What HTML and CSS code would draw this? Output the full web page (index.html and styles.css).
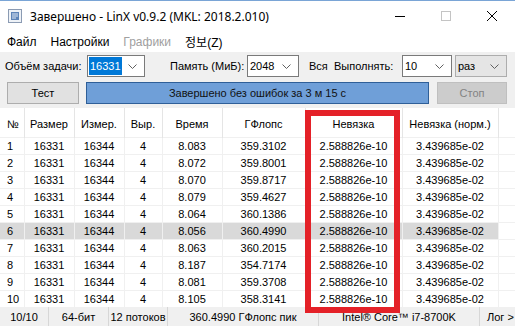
FILE: index.html
```html
<!DOCTYPE html>
<html lang="ru">
<head>
  <meta charset="UTF-8" />
  <title>LinX</title>
  <link rel="stylesheet" href="styles.css">
</head>
<body>
<div class="window">

  <!-- Title bar -->
  <div class="titlebar">
    <svg class="app-icon" width="16" height="16" viewBox="0 0 16 16">
      <rect x="1.5" y="1.5" width="13" height="13" fill="#eef2f7" stroke="#8b9bb3"/>
      <rect x="4" y="4" width="8" height="8" fill="#5d84b8"/>
      <rect x="5" y="5.5" width="6" height="1" fill="#dfe8f3"/>
      <rect x="5" y="7.5" width="6" height="1" fill="#dfe8f3"/>
      <rect x="5" y="9.5" width="4" height="1" fill="#dfe8f3"/>
    </svg>
    <span class="title">Завершено - LinX v0.9.2 (MKL: 2018.2.010)</span>
    <div class="controls">
      <span class="ctl"><svg width="10" height="10" viewBox="0 0 10 10"><line x1="0" y1="5.5" x2="10" y2="5.5" stroke="#000"/></svg></span>
      <span class="ctl"><svg width="10" height="10" viewBox="0 0 10 10"><rect x="0.5" y="0.5" width="9" height="9" fill="none" stroke="#c4c4c4"/></svg></span>
      <span class="ctl"><svg width="10" height="10" viewBox="0 0 10 10"><path d="M0 0 L10 10 M10 0 L0 10" stroke="#000" stroke-width="1"/></svg></span>
    </div>
  </div>

  <!-- Menu -->
  <div class="menubar">
    <span class="menu-item">Файл</span>
    <span class="menu-item">Настройки</span>
    <span class="menu-item disabled">Графики</span>
    <span class="menu-item">정보(Z)</span>
  </div>

  <!-- Settings -->
  <div class="toolbar">
    <div class="tool-row">
      <span class="label lbl-size">Объём задачи:</span>
      <div class="combo cb-size"><span class="selected">16331</span><svg class="chev" width="9" height="5" viewBox="0 0 9 5"><polyline points="0.5,0.5 4.5,4.5 8.5,0.5" fill="none" stroke="#606060"/></svg></div>
      <span class="label lbl-mem">Память (МиБ):</span>
      <div class="combo cb-mem"><span>2048</span><svg class="chev" width="9" height="5" viewBox="0 0 9 5"><polyline points="0.5,0.5 4.5,4.5 8.5,0.5" fill="none" stroke="#606060"/></svg></div>
      <span class="label lbl-all">Вся</span>
      <span class="label lbl-run">Выполнять:</span>
      <div class="combo cb-runs"><span>10</span><svg class="chev" width="9" height="5" viewBox="0 0 9 5"><polyline points="0.5,0.5 4.5,4.5 8.5,0.5" fill="none" stroke="#606060"/></svg></div>
      <div class="combo combo-ro cb-unit"><span>раз</span><svg class="chev" width="9" height="5" viewBox="0 0 9 5"><polyline points="0.5,0.5 4.5,4.5 8.5,0.5" fill="none" stroke="#606060"/></svg></div>
    </div>
    <div class="tool-row">
      <button class="btn btn-test">Тест</button>
      <div class="progress">Завершено без ошибок за 3 м 15 с</div>
      <button class="btn btn-stop" disabled>Стоп</button>
    </div>
  </div>

  <!-- Results -->
  <table class="results">
    <colgroup>
      <col style="width:24px"><col style="width:50px"><col style="width:50px"><col style="width:38px">
      <col style="width:60px"><col style="width:83px"><col style="width:97px"><col style="width:96px"><col>
    </colgroup>
    <thead>
      <tr>
        <th class="num">№</th><th>Размер</th><th>Измер.</th><th>Выр.</th><th>Время</th>
        <th>ГФлопс</th><th>Невязка</th><th>Невязка (норм.)</th><th class="filler"></th>
      </tr>
    </thead>
    <tbody>
      <tr><td class="num">1</td><td>16331</td><td>16344</td><td>4</td><td>8.083</td><td>359.3102</td><td>2.588826e-10</td><td>3.439685e-02</td><td class="filler"></td></tr>
      <tr><td class="num">2</td><td>16331</td><td>16344</td><td>4</td><td>8.072</td><td>359.8001</td><td>2.588826e-10</td><td>3.439685e-02</td><td class="filler"></td></tr>
      <tr><td class="num">3</td><td>16331</td><td>16344</td><td>4</td><td>8.070</td><td>359.8717</td><td>2.588826e-10</td><td>3.439685e-02</td><td class="filler"></td></tr>
      <tr><td class="num">4</td><td>16331</td><td>16344</td><td>4</td><td>8.079</td><td>359.4627</td><td>2.588826e-10</td><td>3.439685e-02</td><td class="filler"></td></tr>
      <tr><td class="num">5</td><td>16331</td><td>16344</td><td>4</td><td>8.064</td><td>360.1386</td><td>2.588826e-10</td><td>3.439685e-02</td><td class="filler"></td></tr>
      <tr class="best"><td class="num">6</td><td>16331</td><td>16344</td><td>4</td><td>8.056</td><td>360.4990</td><td>2.588826e-10</td><td>3.439685e-02</td><td class="filler"></td></tr>
      <tr><td class="num">7</td><td>16331</td><td>16344</td><td>4</td><td>8.063</td><td>360.2015</td><td>2.588826e-10</td><td>3.439685e-02</td><td class="filler"></td></tr>
      <tr><td class="num">8</td><td>16331</td><td>16344</td><td>4</td><td>8.187</td><td>354.7174</td><td>2.588826e-10</td><td>3.439685e-02</td><td class="filler"></td></tr>
      <tr><td class="num">9</td><td>16331</td><td>16344</td><td>4</td><td>8.081</td><td>359.3708</td><td>2.588826e-10</td><td>3.439685e-02</td><td class="filler"></td></tr>
      <tr><td class="num">10</td><td>16331</td><td>16344</td><td>4</td><td>8.105</td><td>358.3141</td><td>2.588826e-10</td><td>3.439685e-02</td><td class="filler"></td></tr>
    </tbody>
  </table>

  <!-- Status bar -->
  <div class="statusbar">
    <span class="sb sb-count">10/10</span>
    <span class="sb sb-bits">64-бит</span>
    <span class="sb sb-threads">12 потоков</span>
    <span class="sb sb-peak">360.4990 ГФлопс пик</span>
    <span class="sb sb-cpu">Intel® Core™ i7-8700K</span>
    <span class="sb sb-log">Лог &gt;</span>
  </div>

  <!-- Red marker round the residual column -->
  <div class="mark-box"></div>
</div>
</body>
</html>
```

FILE: styles.css
```css
* {
  box-sizing: border-box;
}
body {
  margin: 0;
  background: #fff;
  font-family: 'Liberation Sans', 'Noto Sans CJK KR', sans-serif;
  font-size: 11px;
  color: #000;
}
.window {
  position: relative;
  width: 515px;
  height: 326px;
  overflow: hidden;
  background: #fff;
}

/* title bar */
.titlebar {
  height: 31px;
  display: flex;
  align-items: center;
  border-top: 1px solid #7aa5d6;
  background: #fff;
}
.app-icon {
  margin-left: 7px;
  margin-right: 7px;
}
.title {
  font-family: 'Noto Sans', sans-serif;
  font-size: 12px;
  color: #000;
  white-space: nowrap;
}
.controls {
  margin-left: auto;
  display: flex;
  height: 100%;
}
.ctl {
  width: 46px;
  display: flex;
  align-items: center;
  justify-content: center;
}

/* menu */
.menubar {
  height: 21px;
  display: flex;
  align-items: center;
  background: #fff;
  font-size: 12px;
}
.menu-item {
  padding: 0 7px;
  white-space: nowrap;
}
.menu-item.disabled {
  color: #a0a0a0;
}

/* settings */
.toolbar {
  background: #f0f0f0;
  padding: 3px 0 4px 0;
  height: 56px;
}
.tool-row {
  display: flex;
  align-items: center;
  height: 22px;
}
.tool-row + .tool-row {
  margin-top: 5px;
}
.label {
  white-space: nowrap;
}
.lbl-size { margin-left: 5px; width: 82px; }
.lbl-mem  { margin-left: 25px; width: 77px; }
.lbl-all  { margin-left: 10px; width: 25px; }
.lbl-run  { width: 68px; }

.combo {
  height: 22px;
  background: #fff;
  border: 1px solid #7a7a7a;
  display: flex;
  align-items: center;
  padding-left: 1px;
  position: relative;
}
.combo span {
  padding: 0 1px;
  line-height: 18px;
}
.combo .selected {
  background: #0078d7;
  color: #fff;
}
.combo .chev {
  position: absolute;
  right: 7px;
  top: 8px;
}
.combo-ro {
  background: #e5e5e5;
  border-color: #adadad;
}
.cb-size { width: 58px; }
.cb-mem  { width: 52px; }
.cb-runs { width: 50px; }
.cb-unit { width: 52px; margin-left: 3px; }

.btn {
  height: 22px;
  font-family: inherit;
  font-size: 11px;
  border: 1px solid #adadad;
  background: #e1e1e1;
  color: #000;
  padding: 0;
}
.btn-test {
  margin-left: 7px;
  width: 72px;
}
.btn-stop {
  margin-left: 8px;
  width: 70px;
  background: #cccccc;
  border-color: #bfbfbf;
  color: #838383;
}
.progress {
  margin-left: 7px;
  width: 343px;
  height: 22px;
  background: #6f9fd8;
  border: 1px solid #2f5f98;
  display: flex;
  align-items: center;
  justify-content: center;
  color: #111;
}

/* results table */
.results {
  width: 515px;
  table-layout: fixed;
  border-collapse: collapse;
  font-size: 11px;
}
.results th {
  height: 29px;
  padding: 3px 0 0 0;
  font-weight: normal;
  text-align: center;
  border-right: 1px solid #e5e5e5;
  white-space: nowrap;
}
.results td {
  height: 17px;
  padding: 0;
  text-align: center;
  border-right: 1px solid #f0f0f0;
  border-top: 1px solid #f0f0f0;
  white-space: nowrap;
}
.results .num {
  text-align: left;
  padding-left: 7px;
}
.results .filler {
  border-right: none;
}
.results tr.best td {
  background: #d9d9d9;
}
.results tr.best td.filler {
  background: #fff;
}

/* status bar */
.statusbar {
  height: 19px;
  display: flex;
  align-items: center;
  background: #f0f0f0;
  font-size: 11px;
}
.sb {
  height: 100%;
  display: flex;
  align-items: center;
  justify-content: center;
  border-right: 1px solid #d7d7d7;
  white-space: nowrap;
}
.sb-count   { width: 49px; }
.sb-bits    { width: 60px; }
.sb-threads { width: 59px; }
.sb-peak    { width: 151px; }
.sb-cpu     { width: 161px; }
.sb-log     { flex: 1; border-right: none; justify-content: flex-start; padding-left: 7px; }

.mark-box {
  position: absolute;
  left: 305px;
  top: 110px;
  width: 95px;
  height: 203px;
  border: 6px solid #e42128;
}
```
